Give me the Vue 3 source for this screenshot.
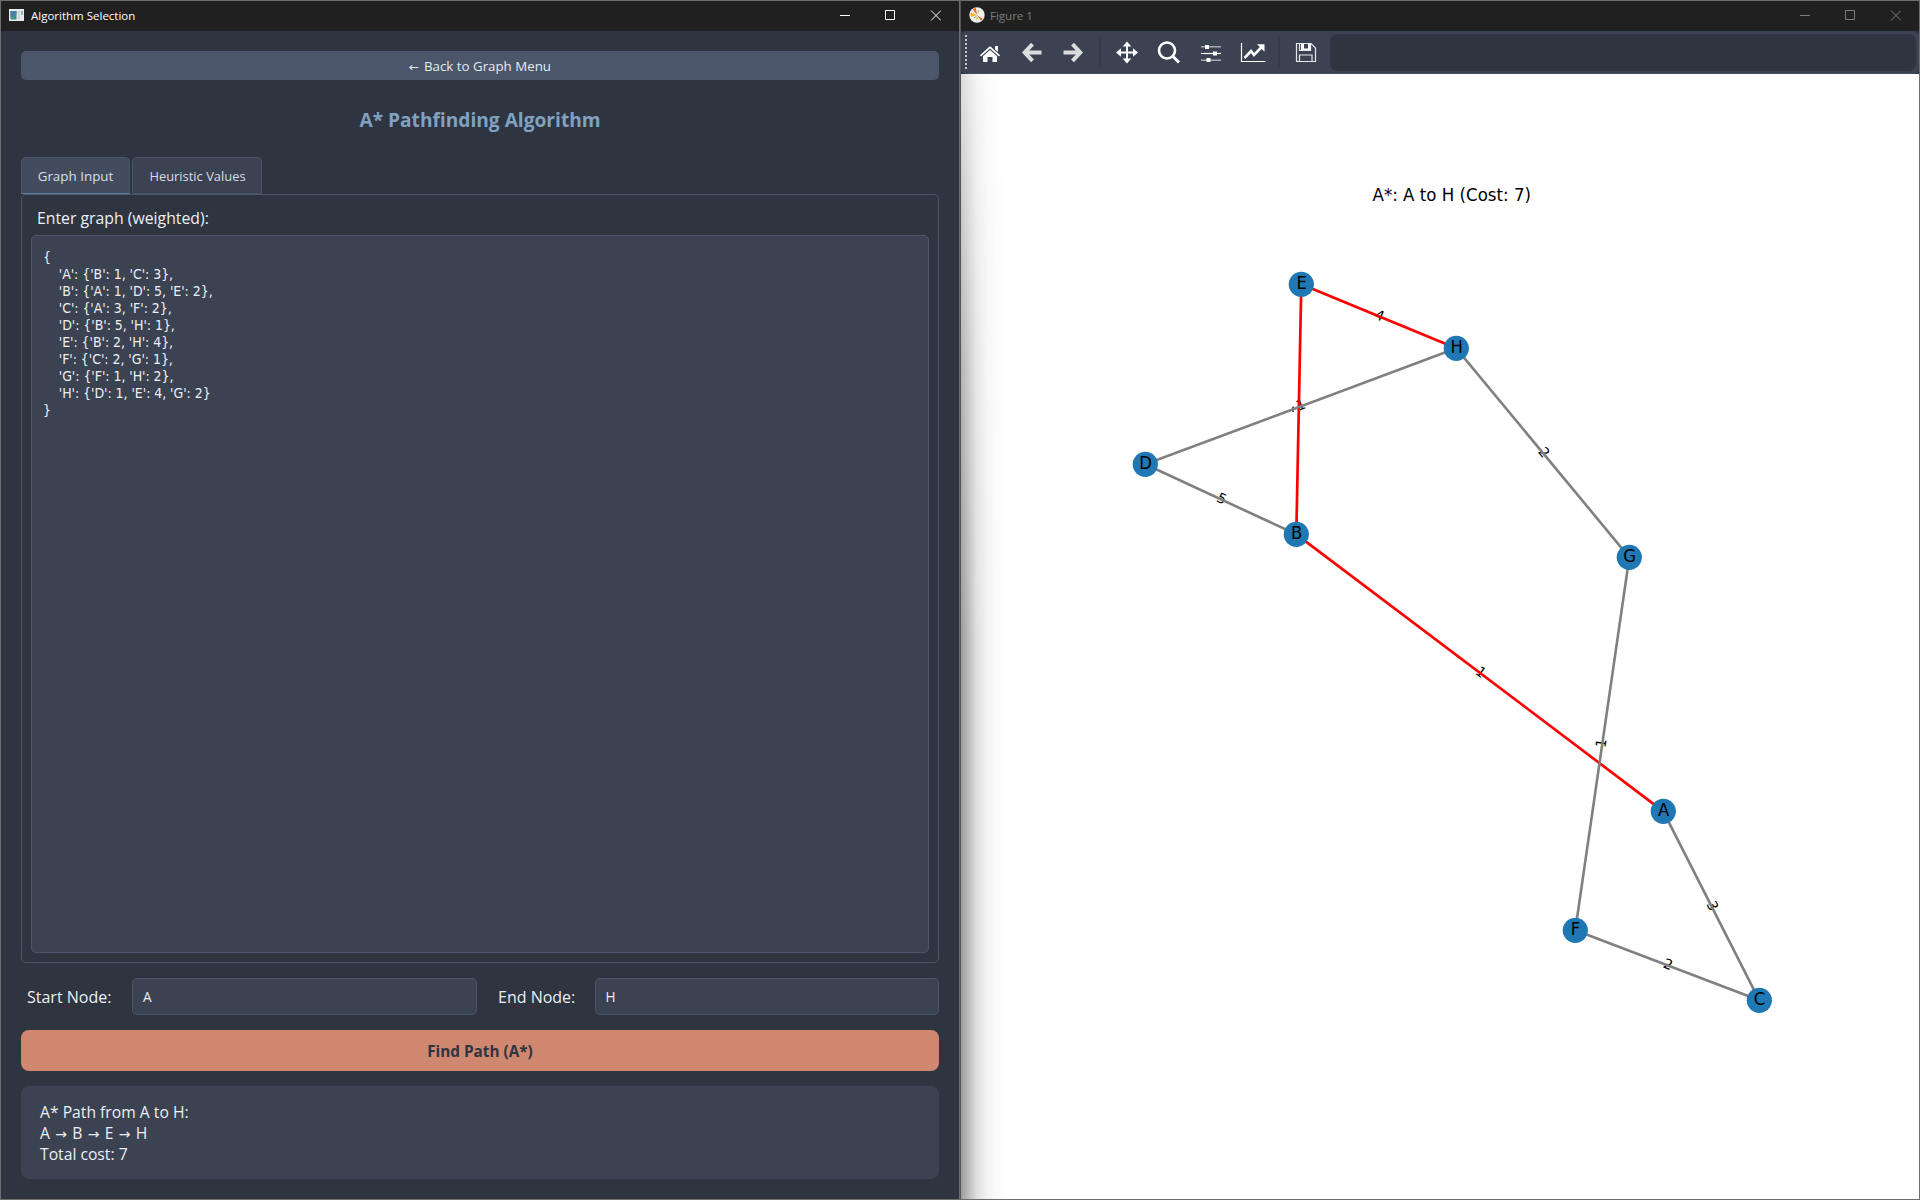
<script setup>
import { ref } from 'vue'

const graphText = ref(`{
    'A': {'B': 1, 'C': 3},
    'B': {'A': 1, 'D': 5, 'E': 2},
    'C': {'A': 3, 'F': 2},
    'D': {'B': 5, 'H': 1},
    'E': {'B': 2, 'H': 4},
    'F': {'C': 2, 'G': 1},
    'G': {'F': 1, 'H': 2},
    'H': {'D': 1, 'E': 4, 'G': 2}
}`)

const nodes = {
  A: [702.3, 737.3],
  B: [335.3, 460.3],
  C: [798.3, 926.3],
  D: [184.3, 390.3],
  E: [340.3, 210.3],
  F: [614.3, 856.3],
  G: [668.3, 483.3],
  H: [495.3, 274.3],
}

const edges = [
  ['A', 'B', 1, true],
  ['B', 'E', 2, true],
  ['E', 'H', 4, true],
  ['A', 'C', 3, false],
  ['B', 'D', 5, false],
  ['C', 'F', 2, false],
  ['D', 'H', 1, false],
  ['F', 'G', 1, false],
  ['G', 'H', 2, false],
].map(([from, to, weight, onPath]) => {
  const [x1, y1] = nodes[from]
  const [x2, y2] = nodes[to]
  let angle = (Math.atan2(y2 - y1, x2 - x1) * 180) / Math.PI
  if (angle > 90) angle -= 180
  if (angle < -90) angle += 180
  return { id: from + to, x1, y1, x2, y2, weight, onPath, angle, mx: (x1 + x2) / 2, my: (y1 + y2) / 2 }
})
</script>

<template>
  <div class="desktop">
    <section class="window main-window">
      <header class="titlebar">
        <svg class="app-icon" width="15" height="12" viewBox="0 0 15 12">
          <rect width="15" height="12" fill="#e9ecee" />
          <rect x="1.5" y="2" width="6" height="8.5" fill="#3f8f8a" />
          <path d="M1.5 2h6v3l-6 3z" fill="#4d7fb0" />
          <rect x="8.5" y="2" width="2.5" height="8.5" fill="#d4d7da" />
          <rect x="12" y="2" width="2" height="4" fill="#93b9b5" />
        </svg>
        <span class="caption">Algorithm Selection</span>
        <svg class="controls" width="101" height="11" viewBox="0 0 101 11">
          <path d="M0 5.5h10M45.5.5h9v9h-9zM91 .5l10 10M101 .5l-10 10" />
        </svg>
      </header>
      <div class="content">
        <button class="back"><span class="arrow-left">←</span>Back to Graph Menu</button>
        <h1>A* Pathfinding Algorithm</h1>
        <nav class="tabs">
          <button class="tab active">Graph Input</button>
          <button class="tab second">Heuristic Values</button>
        </nav>
        <div class="pane">
          <label class="pane-label">Enter graph (weighted):</label>
          <pre class="editor">{{ graphText }}</pre>
        </div>
        <div class="fields">
          <label class="start-label">Start Node:</label>
          <div class="field start">A</div>
          <label class="end-label">End Node:</label>
          <div class="field end">H</div>
        </div>
        <button class="find">Find Path (A*)</button>
        <div class="result">
          <div>A* Path from A to H:</div>
          <div>A<span class="arrow">→</span>B<span class="arrow">→</span>E<span class="arrow">→</span>H</div>
          <div>Total cost: 7</div>
        </div>
      </div>
    </section>

    <section class="window figure-window">
      <header class="titlebar">
        <svg class="app-icon" width="16" height="16" viewBox="0 0 16 16">
          <circle cx="8" cy="8" r="7.7" fill="#f1efec" />
          <path d="M8 8L3.600 2.200 6.800.8z" fill="#ef6a2c" />
          <path d="M8 8L1.800 10 1.600 5.500z" fill="#f2b21c" />
          <path d="M8 8l5.600 4-1.600 1.800z" fill="#ee5a24" />
          <path d="M8 8l1.200-5 1.500.8z" fill="#9fd07e" />
          <path d="M8 8l-.8 4.500 1.800-.2z" fill="#a4cf3c" />
          <path d="M8 8l-3.500 3 .8.8z" fill="#5f9b9b" />
        </svg>
        <span class="caption">Figure 1</span>
        <svg class="controls" width="101" height="11" viewBox="0 0 101 11">
          <path d="M0 5.5h10M45.5.5h9v9h-9zM91 .5l10 10M101 .5l-10 10" />
        </svg>
      </header>
      <div class="toolbar">
        <div class="toolbar-inner">
          <svg class="tools" width="368" height="42" viewBox="0 0 368 42">
            <path d="M5 4v35" stroke="#c3c6cc" stroke-width="2" stroke-dasharray="2 2" />
            <!-- home -->
            <g fill="#fff">
              <path d="M19 24.2L28.5 15.6q.5-.4 1 0L39 24.2l-1.1 1.2L29 17.500l-8.900 7.900z" />
              <path d="M34 15h3v6l-3-2.700z" />
              <path d="M22 25.200L29 19l7 6.200V31h-4.500v-5h-5v5H22z" />
            </g>
            <!-- back, forward -->
            <g fill="none" stroke="#dcdcdc" stroke-width="4">
              <path d="M71.500 13.200L63.700 21.500l7.800 8.300M64 21.500h16.500" />
              <path d="M111.500 13.200l7.800 8.300-7.800 8.300M119 21.500h-16.500" />
            </g>
            <path d="M139 6v30M318 6v30" stroke="#323845" stroke-width="1.500" />
            <!-- pan -->
            <g fill="#fff">
              <path d="M165 14h2v15h-2zM158.500 20.500h15v2h-15z" />
              <path d="M166 10.500l4.300 5h-8.600zM166 32.500l4.300-5h-8.600zM155 21.500l5-4.300v8.600zM177 21.500l-5-4.300v8.600z" />
            </g>
            <!-- zoom -->
            <circle cx="206" cy="19.500" r="8" fill="none" stroke="#fff" stroke-width="2.600" />
            <path d="M211.500 25l6.500 6.500" stroke="#fff" stroke-width="3" />
            <!-- subplots -->
            <path d="M240 15.700h20M240 29.300h20" stroke="#a5a9b1" stroke-width="1.600" />
            <path d="M240 22.500h20" stroke="#fff" stroke-width="1.200" />
            <path d="M244 14h4v4h-4zM252 20.500h4v4h-4zM245.500 27h4v4h-4z" fill="#fff" />
            <!-- customize -->
            <path d="M280.500 12v18.500h24" fill="none" stroke="#fff" stroke-width="1.200" />
            <path d="M283.500 27l6.500-7 3 4 8-8.300" fill="none" stroke="#fff" stroke-width="2.600" />
            <path d="M303.500 13.300v7.500l-7.500-7.500z" fill="#fff" />
            <!-- save -->
            <g fill="none" stroke="#e6e7ea" stroke-width="1.200">
              <path d="M335.500 12.500h14.500l4.500 4.500v13.500h-19z" />
              <path d="M338.500 12.500v7h11v-7M338.500 30.500v-6.500h12.500v6.500" />
            </g>
            <path d="M340 13h3v6h-3zM347 13h2.500v6H347zM340 17.500h9v1.500h-9z" fill="#fff" />
          </svg>
          <div class="status"></div>
        </div>
      </div>
      <div class="canvas">
        <svg width="958" height="1125" viewBox="0 0 958 1125">
          <text class="plot-title" x="411.500" y="127" textLength="158.500" lengthAdjust="spacingAndGlyphs">A*: A to H (Cost: 7)</text>
          <g v-for="e in edges" :key="'l' + e.id" :transform="`translate(${e.mx} ${e.my}) rotate(${e.angle})`">
            <rect x="-7" y="-9" width="14" height="17" fill="#fff" />
            <text class="weight" x="0.500" y="3.600">{{ e.weight }}</text>
          </g>
          <line
            v-for="e in edges"
            :key="e.id"
            :x1="e.x1"
            :y1="e.y1"
            :x2="e.x2"
            :y2="e.y2"
            :class="['edge', { path: e.onPath }]"
          />
          <g v-for="([x, y], name) in nodes" :key="name" :transform="`translate(${x} ${y})`">
            <circle r="12.600" fill="#1f77b4" />
            <text class="node" x="0.300" y="4.600" transform="scale(0.94 1)">{{ name }}</text>
          </g>
        </svg>
      </div>
    </section>
  </div>
</template>

<style>
body {
  margin: 0;
  overflow: hidden;
}
</style>

<style scoped>
.desktop {
  width: 1920px;
  height: 1200px;
  display: flex;
  font-family: "Open Sans", "Noto Sans", sans-serif;
  color: #eceff4;
}
.window {
  box-sizing: border-box;
  width: 960px;
  height: 1200px;
  border: 1px solid #6e6e6e;
  display: flex;
  flex-direction: column;
  overflow: hidden;
}
.figure-window {
  border-left-color: #555557;
}
.titlebar {
  height: 30px;
  flex: none;
  display: flex;
  align-items: center;
  background: #202020;
  font-size: 11.5px;
}
.app-icon {
  margin-left: 8px;
  margin-top: -2px;
}
.caption {
  margin-left: 7px;
  margin-top: -1px;
  color: #fff;
  flex: 1;
}
.controls {
  margin-top: -1px;
  margin-right: 18px;
  fill: none;
  stroke: #fff;
  stroke-width: 1;
}
.figure-window .caption {
  margin-left: 5px;
  color: #7d7d7d;
}
.figure-window .controls {
  stroke: #7d7d7d;
}
button {
  border: 0;
  padding: 0;
  font-family: inherit;
  color: inherit;
}
.content {
  flex: 1;
  display: flex;
  flex-direction: column;
  padding: 20px;
  background: #2e3440;
}
.back {
  height: 29px;
  flex: none;
  border-radius: 5px;
  background: #4c566a;
  color: #e5e9f0;
  font-size: 13.3px;
  font-weight: 500;
  line-height: 30px;
}
.arrow-left {
  display: inline-block;
  width: 15px;
  text-align: left;
  font-family: "DejaVu Sans", sans-serif;
  font-size: 12px;
}
h1 {
  margin: 0;
  height: 77px;
  line-height: 80px;
  text-align: center;
  font-size: 19.15px;
  font-weight: 700;
  color: #81a1c1;
}
.tabs {
  display: flex;
  gap: 2px;
  height: 37px;
}
.tab {
  box-sizing: border-box;
  width: 109px;
  border: 1px solid #4c566a;
  border-radius: 5px 5px 0 0;
  background: #3b4252;
  color: #d8dee9;
  font-size: 13.4px;
}
.tab.active {
  background: #434c5e;
  border-bottom-color: #5e81ac;
}
.tab.second {
  width: 130px;
  font-size: 12.9px;
  padding-left: 1px;
}
.pane {
  box-sizing: border-box;
  height: 769px;
  border: 1px solid #4c566a;
  border-radius: 5px;
  padding: 9px;
  display: flex;
  flex-direction: column;
}
.pane-label {
  height: 31px;
  line-height: 28px;
  padding-left: 6px;
  font-size: 15.8px;
}
.editor {
  flex: 1;
  margin: 0;
  border: 1px solid #4c566a;
  border-radius: 5px;
  background: #3b4252;
  padding: 13px 11px;
  color: #eceff4;
  font-family: "DejaVu Sans Condensed", "DejaVu Sans", sans-serif;
  font-stretch: condensed;
  font-size: 14px;
  line-height: 17px;
  letter-spacing: -0.06px;
}
.fields {
  display: flex;
  align-items: center;
  height: 37px;
  margin-top: 15px;
  font-size: 16px;
}
.start-label {
  width: 105px;
  padding-left: 6px;
}
.end-label {
  width: 96.5px;
  padding-left: 21.5px;
}
.field {
  flex: 1;
  box-sizing: border-box;
  height: 37px;
  border: 1px solid #4c566a;
  border-radius: 5px;
  background: #3b4252;
  padding-left: 10px;
  font-size: 13.6px;
  line-height: 36px;
}
.find {
  height: 41px;
  flex: none;
  margin-top: 15px;
  border-radius: 8px;
  background: #d08770;
  color: #2e3440;
  font-size: 15.3px;
  font-weight: 700;
  line-height: 42px;
}
.result {
  box-sizing: border-box;
  height: 93px;
  margin-top: 15px;
  border-radius: 8px;
  background: #3b4252;
  padding: 16px 19px;
  font-size: 15.7px;
  line-height: 21px;
}
.arrow {
  display: inline-block;
  width: 22.3px;
  text-align: center;
  line-height: 20px;
  font-family: "DejaVu Sans", sans-serif;
  font-size: 14px;
}
.toolbar {
  height: 43px;
  flex: none;
  background: #2e3440;
}
.toolbar-inner {
  box-sizing: border-box;
  height: 43px;
  border-radius: 6px;
  border-bottom: 1px solid #434c5e;
  background: #3b4252;
  display: flex;
}
.tools {
  flex: none;
}
.status {
  flex: 1;
  margin: 3px 3px 2px 1px;
  border-radius: 8px;
  background: #2e3440;
}
.canvas {
  height: 1125px;
  background: #fff;
  position: relative;
}
.canvas svg {
  display: block;
}
.canvas::before {
  content: "";
  position: absolute;
  left: 0;
  top: 0;
  width: 46px;
  height: 1125px;
  background: linear-gradient(to right, rgba(0, 0, 0, 0.39), rgba(0, 0, 0, 0.27) 15%, rgba(0, 0, 0, 0.13) 33%, rgba(0, 0, 0, 0.05) 55%, rgba(0, 0, 0, 0.015) 78%, transparent);
  mask-image: linear-gradient(to bottom, rgba(0, 0, 0, 0.35), rgba(0, 0, 0, 0.75) 25%, #000 50%);
}
.plot-title {
  font-family: "DejaVu Sans", sans-serif;
  font-size: 17.8px;
}
.weight,
.node {
  font-family: "DejaVu Sans", sans-serif;
  text-anchor: middle;
}
.weight {
  font-size: 14px;
}
.node {
  font-size: 17.5px;
}
.edge {
  stroke: #808080;
  stroke-width: 2.6;
}
.edge.path {
  stroke: #f00;
  stroke-width: 2.7;
}
</style>
